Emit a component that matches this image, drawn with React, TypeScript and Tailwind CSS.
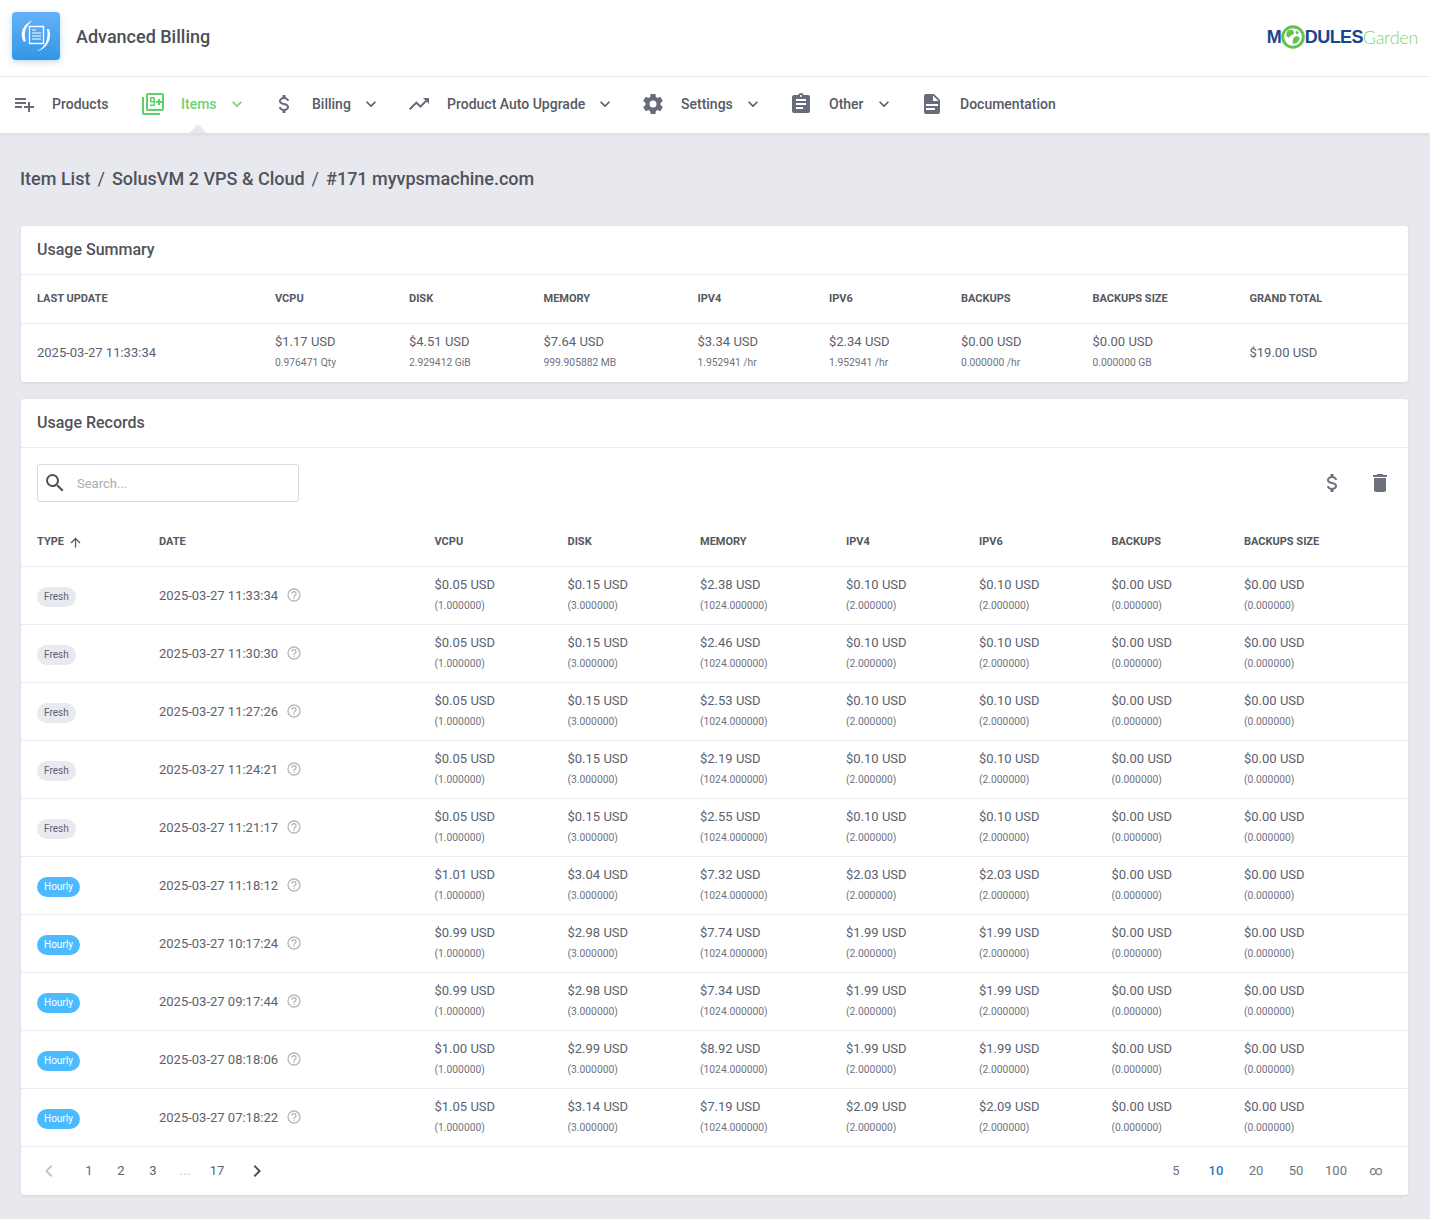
const P = {
  playlist: "M3 16H10V14H3M18 14V10H16V14H12V16H16V20H18V16H22V14M14 6H3V8H14M14 10H3V12H14V10Z",
  usd: "M7,15H9C9,16.08 10.37,17 12,17C13.63,17 15,16.08 15,15C15,13.9 13.96,13.5 11.76,12.97C9.64,12.44 7,11.78 7,9C7,7.21 8.47,5.69 10.5,5.18V3H13.5V5.18C15.53,5.69 17,7.21 17,9H15C15,7.92 13.63,7 12,7C10.37,7 9,7.92 9,9C9,10.1 10.04,10.5 12.24,11.03C14.36,11.56 17,12.22 17,15C17,16.79 15.53,18.31 13.5,18.82V21H10.5V18.82C8.47,18.31 7,16.79 7,15Z",
  trending: "M16,6L18.29,8.29L13.41,13.17L9.41,9.17L2,16.59L3.41,18L9.41,12L13.41,16L19.71,9.71L22,12V6H16Z",
  cog: "M12,15.5A3.5,3.5 0 0,1 8.5,12A3.5,3.5 0 0,1 12,8.5A3.5,3.5 0 0,1 15.5,12A3.5,3.5 0 0,1 12,15.5M19.43,12.97C19.47,12.65 19.5,12.33 19.5,12C19.5,11.67 19.47,11.34 19.43,11L21.54,9.37C21.73,9.22 21.78,8.95 21.66,8.73L19.66,5.27C19.54,5.05 19.27,4.96 19.05,5.05L16.56,6.05C16.04,5.66 15.5,5.32 14.87,5.07L14.5,2.42C14.46,2.18 14.25,2 14,2H10C9.75,2 9.54,2.18 9.5,2.42L9.13,5.07C8.5,5.32 7.96,5.66 7.44,6.05L4.95,5.05C4.73,4.96 4.46,5.05 4.34,5.27L2.34,8.73C2.21,8.95 2.27,9.22 2.46,9.37L4.57,11C4.53,11.34 4.5,11.67 4.5,12C4.5,12.33 4.53,12.65 4.57,12.97L2.46,14.63C2.27,14.78 2.21,15.05 2.34,15.27L4.34,18.73C4.46,18.95 4.73,19.03 4.95,18.95L7.44,17.94C7.96,18.34 8.5,18.68 9.13,18.93L9.5,21.58C9.54,21.82 9.75,22 10,22H14C14.25,22 14.46,21.82 14.5,21.58L14.87,18.93C15.5,18.67 16.04,18.34 16.56,17.94L19.05,18.95C19.27,19.03 19.54,18.95 19.66,18.73L21.66,15.27C21.78,15.05 21.73,14.78 21.54,14.63L19.43,12.97Z",
  clipboard: "M17,9H7V7H17M17,13H7V11H17M14,17H7V15H14M12,3A1,1 0 0,1 13,4A1,1 0 0,1 12,5A1,1 0 0,1 11,4A1,1 0 0,1 12,3M19,3H14.82C14.4,1.84 13.3,1 12,1C10.7,1 9.6,1.84 9.18,3H5A2,2 0 0,0 3,5V19A2,2 0 0,0 5,21H19A2,2 0 0,0 21,19V5A2,2 0 0,0 19,3Z",
  file: "M13,9H18.5L13,3.5V9M6,2H14L20,8V20A2,2 0 0,1 18,22H6C4.89,22 4,21.1 4,20V4C4,2.89 4.89,2 6,2M15,18V16H6V18H15M18,14V12H6V14H18Z",
  magnify: "M9.5,3A6.5,6.5 0 0,1 16,9.5C16,11.11 15.41,12.59 14.44,13.73L14.71,14H15.5L20.5,19L19,20.5L14,15.5V14.71L13.73,14.44C12.59,15.41 11.11,16 9.5,16A6.5,6.5 0 0,1 3,9.5A6.5,6.5 0 0,1 9.5,3M9.5,5C7,5 5,7 5,9.5C5,12 7,14 9.5,14C12,14 14,12 14,9.5C14,7 12,5 9.5,5Z",
  trash: "M19,4H15.5L14.5,3H9.5L8.5,4H5V6H19M6,19A2,2 0 0,0 8,21H16A2,2 0 0,0 18,19V7H6V19Z",
  help: "M11,18H13V16H11V18M12,2A10,10 0 0,0 2,12A10,10 0 0,0 12,22A10,10 0 0,0 22,12A10,10 0 0,0 12,2M12,20C7.59,20 4,16.41 4,12C4,7.59 7.59,4 12,4C16.41,4 20,7.59 20,12C20,16.41 16.41,20 12,20M12,6A4,4 0 0,0 8,10H10A2,2 0 0,1 12,8A2,2 0 0,1 14,10C14,12 11,11.75 11,15H13C13,12.75 16,12.5 16,10A4,4 0 0,0 12,6Z",
  down: "M7.41,8.58L12,13.17L16.59,8.58L18,10L12,16L6,10L7.41,8.58Z",
  left: "M15.41,16.58L10.83,12L15.41,7.41L14,6L8,12L14,18L15.41,16.58Z",
  right: "M8.59,16.58L13.17,12L8.59,7.41L10,6L16,12L10,18L8.59,16.58Z",
  up: "M13,20H11V8L5.5,13.5L4.08,12.08L12,4.16L19.92,12.08L18.5,13.5L13,8V20Z",
};

function Icon({ d, className }: { d: string; className: string }) {
  return (
    <svg viewBox="0 0 24 24" fill="currentColor" className={className}>
      <path d={d} />
    </svg>
  );
}

function ItemsIcon() {
  return (
    <svg viewBox="0 0 24 24" className="w-[24px] h-[24px] text-[#5fcf6a]" fill="currentColor">
      <path d="M1 5H3V21H19V23H3A2 2 0 0 1 1 21V5Z" />
      <path fillRule="evenodd" d="M7 1H21A2 2 0 0 1 23 3V17A2 2 0 0 1 21 19H7A2 2 0 0 1 5 17V3A2 2 0 0 1 7 1ZM7 3V17H21V3H7Z" />
      <path d="M15 9H17V7H19V9H21V11H19V13H17V11H15V9Z" />
      <path fillRule="evenodd" d="M10 5H13A1 1 0 0 1 14 6V13A1 1 0 0 1 13 14H9V12.5H12.5V10.5H10A1 1 0 0 1 9 9.5V6A1 1 0 0 1 10 5ZM10.5 6.5V9H12.5V6.5H10.5Z" />
    </svg>
  );
}

function AppIcon() {
  return (
    <div className="w-[48px] h-[48px] rounded-[4px] bg-gradient-to-b from-[#63b1f8] to-[#2f97e6] shadow-[0_2px_6px_rgba(60,130,200,0.3)]">
      <svg viewBox="0 0 48 48" className="w-[48px] h-[48px]" fill="none">
        <path d="M21 8.5C12 11 6.5 21 12 30L14 29C11 21 14 13 21 8.5Z" fill="#fff" />
        <path d="M35 17C37 27 33 36 25 39C33 38 41 28 37 17Z" fill="#fff" />
        <rect x="17.5" y="14.5" width="14" height="17" stroke="#fff" strokeWidth="1.4" />
        <path d="M20 18H24M20 21H29M20 24H29M20 27H29" stroke="#fff" strokeWidth="1" />
      </svg>
    </div>
  );
}

function Logo() {
  return (
    <div className="flex items-center h-[24px] font-['Liberation_Sans',sans-serif] leading-none">
      <span className="text-[18px] font-bold text-[#17458f]">M</span>
      <svg viewBox="0 0 24 24" className="w-[24px] h-[24px] -ml-[0.5px]">
        <circle cx="12" cy="12" r="10.3" fill="#fff" stroke="#66c24f" strokeWidth="3" />
        <path d="M7 5.5C10 4 13 5 13 7.5C13 10 10 9.5 8.5 12C8 13 6.5 12.5 5.5 11C5 9 5.5 7 7 5.5ZM13 12.5C15.5 10.5 18.5 11 18.5 13.5C18.5 16.5 15 19 11.5 18.8C12 16.5 11.5 14 13 12.5ZM15 5.5L18 7.5L16 9.5L14.5 8Z" fill="#66c24f" />
      </svg>
      <span className="text-[18px] font-bold text-[#17458f] -ml-[0.5px] tracking-[-0.6px]">DULES</span>
      <span className="text-[18px] text-[#7ed371] font-['Lato',sans-serif] font-light tracking-[-0.3px]">Garden</span>
    </div>
  );
}

const nav = [
  { label: "Products", icon: P.playlist, w: "w-[129px]" },
  { label: "Items", icon: "", w: "w-[131px]", active: true, caret: true },
  { label: "Billing", icon: P.usd, w: "w-[135px]", caret: true },
  { label: "Product Auto Upgrade", icon: P.trending, w: "w-[234px]", caret: true },
  { label: "Settings", icon: P.cog, w: "w-[148px]", caret: true },
  { label: "Other", icon: P.clipboard, w: "w-[131px]", caret: true },
  { label: "Documentation", icon: P.file, w: "w-[160px]" },
];

const summary = [
  ["VCPU", "$1.17 USD", "0.976471 Qty"],
  ["DISK", "$4.51 USD", "2.929412 GiB"],
  ["MEMORY", "$7.64 USD", "999.905882 MB"],
  ["IPV4", "$3.34 USD", "1.952941 /hr"],
  ["IPV6", "$2.34 USD", "1.952941 /hr"],
  ["BACKUPS", "$0.00 USD", "0.000000 /hr"],
  ["BACKUPS SIZE", "$0.00 USD", "0.000000 GB"],
];

const records = [
  ["Fresh", "2025-03-27 11:33:34", "$0.05", "$0.15", "$2.38", "$0.10"],
  ["Fresh", "2025-03-27 11:30:30", "$0.05", "$0.15", "$2.46", "$0.10"],
  ["Fresh", "2025-03-27 11:27:26", "$0.05", "$0.15", "$2.53", "$0.10"],
  ["Fresh", "2025-03-27 11:24:21", "$0.05", "$0.15", "$2.19", "$0.10"],
  ["Fresh", "2025-03-27 11:21:17", "$0.05", "$0.15", "$2.55", "$0.10"],
  ["Hourly", "2025-03-27 11:18:12", "$1.01", "$3.04", "$7.32", "$2.03"],
  ["Hourly", "2025-03-27 10:17:24", "$0.99", "$2.98", "$7.74", "$1.99"],
  ["Hourly", "2025-03-27 09:17:44", "$0.99", "$2.98", "$7.34", "$1.99"],
  ["Hourly", "2025-03-27 08:18:06", "$1.00", "$2.99", "$8.92", "$1.99"],
  ["Hourly", "2025-03-27 07:18:22", "$1.05", "$3.14", "$7.19", "$2.09"],
];

const summaryGrid = "grid grid-cols-[238px_134px_134.5px_154px_131.5px_132px_131.5px_157px_1fr] pl-[16px]";
const recordGrid = "grid grid-cols-[122px_275.5px_133px_132.5px_146px_133px_132.5px_132.5px_1fr] pl-[16px]";
const th = "text-[11px] font-bold text-[#55585f]";

function Amount({ value, sub }: { value: string; sub: string }) {
  return (
    <div className="mb-[2px]">
      <div className="text-[13px] leading-[16px] text-[#5c616d]">{value}</div>
      <div className="text-[10.3px] leading-[14px] mt-[6px] text-[#6f737d]">{sub}</div>
    </div>
  );
}

export default function App() {
  return (
    <div className="min-h-[1219px] bg-[#e8e9ef] font-['Roboto',sans-serif] text-[#5c616d]">
      <header className="h-[77px] bg-white border-b border-[#eff0f3] flex items-start justify-between pt-[12px] px-[12px]">
        <div className="flex items-center gap-[16px] h-[48px]">
          <AppIcon />
          <span className="text-[18px] font-medium text-[#4c4f57]">Advanced Billing</span>
        </div>
        <div className="pt-[13px]">
          <Logo />
        </div>
      </header>

      <nav className="h-[56px] pb-[2px] bg-white shadow-[0_1px_4px_rgba(80,85,100,0.12)] flex items-center pl-[12px] relative">
        {nav.map((n) => (
          <div key={n.label} className={`${n.w} flex items-center h-full`}>
            <div className="w-[40px] flex items-center">
              {n.active ? <ItemsIcon /> : <Icon d={n.icon} className="w-[24px] h-[24px] text-[#686c78]" />}
            </div>
            <span className={`text-[14px] font-medium ${n.active ? "text-[#6fd276]" : "text-[#565a64]"}`}>{n.label}</span>
            {n.caret && (
              <Icon d={P.down} className={`w-[20px] h-[20px] ml-[10px] ${n.active ? "text-[#6fd276]" : "text-[#565a64]"}`} />
            )}
          </div>
        ))}
        <div className="absolute left-[189px] bottom-0 w-0 h-0 border-l-[9px] border-r-[9px] border-b-[9px] border-l-transparent border-r-transparent border-b-[#e8e9ef]" />
      </nav>

      <main className="px-[21px] pt-[32px]">
        <h1 className="h-[26px] flex items-center gap-[7px] text-[18px] font-medium text-[#50535b] -ml-[1px]">
          <span>Item List</span>
          <span className="font-normal">/</span>
          <span>SolusVM 2 VPS &amp; Cloud</span>
          <span className="font-normal">/</span>
          <span>#171 myvpsmachine.com</span>
        </h1>

        <section className="mt-[35px] w-[1387px] bg-white rounded-[3px] shadow-[0_1px_3px_rgba(80,85,100,0.12)]">
          <h2 className="h-[49px] flex items-center pl-[16px] text-[16px] font-medium text-[#50535b] border-b border-[#ebecf0]">Usage Summary</h2>
          <div className={`${summaryGrid} h-[49px] items-center border-b border-[#ebecf0]`}>
            <div className={th}>LAST UPDATE</div>
            {summary.map((s) => (
              <div key={s[0]} className={th}>{s[0]}</div>
            ))}
            <div className={th}>GRAND TOTAL</div>
          </div>
          <div className={`${summaryGrid} h-[58px] items-center`}>
            <div className="text-[13px]">2025-03-27 11:33:34</div>
            {summary.map((s) => (
              <Amount key={s[0]} value={s[1]} sub={s[2]} />
            ))}
            <div className="text-[13px]">$19.00 USD</div>
          </div>
        </section>

        <section className="mt-[17px] w-[1387px] bg-white rounded-[3px] shadow-[0_1px_3px_rgba(80,85,100,0.12)]">
          <h2 className="h-[49px] flex items-center pl-[16px] text-[16px] font-medium text-[#50535b] border-b border-[#ebecf0]">Usage Records</h2>
          <div className="flex items-center justify-between px-[16px] pt-[16px]">
            <div className="w-[262px] h-[38px] border border-[#d7d9e2] rounded-[3px] flex items-center pl-[5px]">
              <Icon d={P.magnify} className="w-[24px] h-[24px] text-[#4d5158]" />
              <span className="ml-[10px] mt-[2px] text-[13px] text-[#a9acb3]">Search...</span>
            </div>
            <div className="flex items-center gap-[24px]">
              <Icon d={P.usd} className="w-[24px] h-[24px] text-[#6d717d]" />
              <Icon d={P.trash} className="w-[24px] h-[24px] text-[#6d717d]" />
            </div>
          </div>
          <div className={`${recordGrid} mt-[15px] h-[50px] pt-[2px] items-center border-b border-[#ebecf0]`}>
            <div className={`${th} flex items-center gap-[4px]`}>
              TYPE <Icon d={P.up} className="w-[15px] h-[15px] text-[#55585f]" />
            </div>
            {["DATE", "VCPU", "DISK", "MEMORY", "IPV4", "IPV6", "BACKUPS", "BACKUPS SIZE"].map((h) => (
              <div key={h} className={th}>{h}</div>
            ))}
          </div>
          {records.map((r) => {
            const subs = ["(1.000000)", "(3.000000)", "(1024.000000)", "(2.000000)", "(2.000000)", "(0.000000)", "(0.000000)"];
            const vals = [r[2], r[3], r[4], r[5], r[5], "$0.00", "$0.00"];
            return (
              <div key={r[1]} className={`${recordGrid} h-[58px] items-center border-b border-[#ebecf0]`}>
                <div className="flex mt-[2px]">
                  {r[0] === "Fresh" ? (
                    <span className="flex items-center h-[20px] px-[7px] rounded-full bg-[#e9eaf0] text-[10px] text-[#5c616d]">Fresh</span>
                  ) : (
                    <span className="flex items-center h-[20px] px-[7px] rounded-full bg-[#4cbaff] text-[10px] text-white">Hourly</span>
                  )}
                </div>
                <div className="flex items-center gap-[8px] text-[13px]">
                  {r[1]}
                  <Icon d={P.help} className="w-[16px] h-[16px] -mt-[2px] text-[#b3b5bb]" />
                </div>
                {vals.map((v, i) => (
                  <Amount key={i} value={`${v} USD`} sub={subs[i]} />
                ))}
              </div>
            );
          })}
          <div className="h-[48px] flex items-center justify-between pl-[16px] pr-[12px] text-[13px]">
            <div className="flex items-center">
              <Icon d={P.left} className="w-[24px] h-[24px] text-[#c3c5ca]" />
              <div className="flex items-center ml-[12px]">
                <span className="w-[32px] text-center text-[#4b6b8c]">1</span>
                <span className="w-[32px] text-center">2</span>
                <span className="w-[32px] text-center">3</span>
                <span className="w-[32px] text-center text-[#c0c2c8]">...</span>
                <span className="w-[32px] text-center">17</span>
              </div>
              <Icon d={P.right} className="w-[24px] h-[24px] text-[#4d5158] ml-[12px]" />
            </div>
            <div className="flex items-center">
              {["5", "10", "20", "50", "100", "∞"].map((p) => (
                <span key={p} className={`w-[40px] text-center ${p === "10" ? "text-[#2b77c4] font-medium" : "text-[#6f737d]"}`}>{p}</span>
              ))}
            </div>
          </div>
        </section>
      </main>
    </div>
  );
}
